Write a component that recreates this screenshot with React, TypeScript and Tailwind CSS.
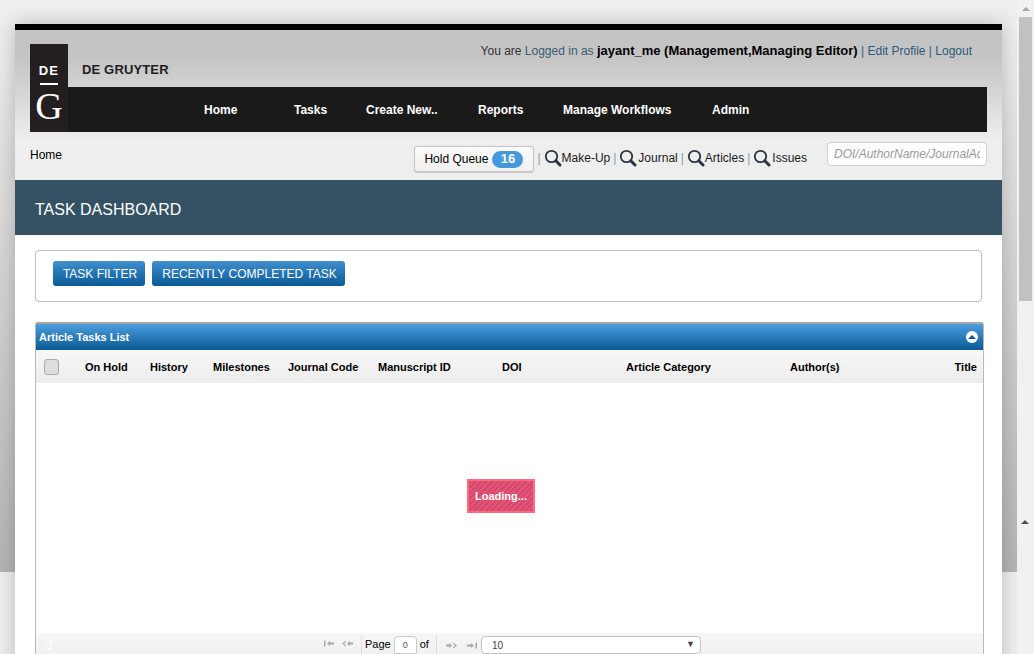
function SearchIcon() {
  return (
    <svg width="18" height="18" viewBox="0 0 18 18" className="shrink-0">
      <circle cx="7.5" cy="7.5" r="5.7" fill="none" stroke="#2c3440" strokeWidth="1.8" />
      <path d="M11.8 11.8 L16 16" stroke="#2c3440" strokeWidth="3" strokeLinecap="round" />
    </svg>
  );
}

function Pipe() {
  return <span className="mx-[3px] text-[#8a9aa5]">|</span>;
}

function PagerArrows({ flip }: { flip?: boolean }) {
  const fill = "#a8a8a8";
  return (
    <div className={flip ? "flex rotate-180 items-center gap-[10px]" : "flex items-center gap-[8px]"}>
      <svg width="10" height="7" viewBox="0 0 10 7">
        <rect x="0" y="0.5" width="1.5" height="6" fill={fill} />
        <path d="M3 3.5 L6 1 V2.5 H10 V4.5 H6 V6 Z" fill={fill} />
      </svg>
      <svg width="11" height="7" viewBox="0 0 11 7">
        <path d="M0 3.5 L4 0.5 V2 L1.8 3.5 L4 5 V6.5 Z" fill={fill} />
        <path d="M5 3.5 L8 1 V2.5 H11 V4.5 H8 V6 Z" fill={fill} />
      </svg>
    </div>
  );
}

const columns = [
  { label: "On Hold", width: "w-[65px]" },
  { label: "History", width: "w-[63px]" },
  { label: "Milestones", width: "w-[75px]" },
  { label: "Journal Code", width: "w-[90px]" },
  { label: "Manuscript ID", width: "w-[124px]" },
  { label: "DOI", width: "w-[124px]" },
  { label: "Article Category", width: "w-[164px]" },
  { label: "Author(s)", width: "w-[164px]" },
];

const menu = [
  { label: "Home", width: "w-[90px]" },
  { label: "Tasks", width: "w-[72px]" },
  { label: "Create New..", width: "w-[112px]" },
  { label: "Reports", width: "w-[85px]" },
  { label: "Manage Workflows", width: "w-[149px]" },
  { label: "Admin", width: "w-[60px]" },
];

export default function App() {
  return (
    <div className="flex h-[654px] w-[1034px] overflow-hidden bg-[#eeeeee] font-['Liberation_Sans',Arial,sans-serif] text-[12px] text-black">
      {/* page */}
      <div className="relative w-[1017px] shrink-0 bg-[linear-gradient(to_bottom,#eeeeee_0px,#eeeeee_24px,#b4b4b4_572px,#eeeeee_572px)] px-[15px] pt-[24px]">
        <div className="h-[800px] w-[987px] bg-white shadow-[0_0_18px_rgba(0,0,0,0.22)]">
          {/* header */}
          <div className="border-t-[6px] border-black bg-[linear-gradient(to_bottom,#c3c3c3_0px,#c5c5c5_30px,#eeeeee_110px)]">
            <div className="relative px-[15px] pt-[14px]">
              <div className="absolute left-[15px] top-[14px] z-10 flex h-[88px] w-[38px] flex-col items-center bg-[#231f20] text-white">
                <span className="mt-[20px] text-[13px] font-bold leading-none tracking-[1.2px]">DE</span>
                <div className="mt-[6px] h-[2px] w-[18px] bg-white" />
                <span className="mt-[2px] font-['Liberation_Serif',serif] text-[38px] leading-[38px]">G</span>
              </div>
              <div className="flex h-[43px] justify-between">
                <div className="pl-[52px] pt-[19px] text-[13px] font-bold leading-[14px] tracking-[0.15px] text-[#231f20]">
                  DE GRUYTER
                </div>
                <div className="pr-[15px] text-right text-[12px] leading-[14px] text-[#333333]">
                  You are <span className="text-[#3a5a75]">Logged in as</span>{" "}
                  <span className="text-[13px] font-bold text-black">jayant_me (Management,Managing Editor)</span>{" "}
                  <span className="text-[#2a5a7a]">| Edit Profile | Logout</span>
                </div>
              </div>
              <div className="flex h-[45px] items-center bg-[#1a1a1a] pl-[174px] text-[12px] font-bold text-white">
                {menu.map((item) => (
                  <span key={item.label} className={item.width}>
                    {item.label}
                  </span>
                ))}
              </div>
            </div>
            {/* breadcrumb row */}
            <div className="flex h-[48px] items-start justify-between px-[15px]">
              <span className="pt-[16px] text-[12px] leading-[14px]">Home</span>
              <div className="flex items-start">
                <div className="mt-[14px] flex h-[26px] w-[120px] items-center rounded-[3px] border border-[#c4c4c4] bg-[linear-gradient(to_bottom,#fafafa,#f0f0f0)] pl-[9px] shadow-[0_1px_1px_rgba(0,0,0,0.15)]">
                  <span className="text-[12px]">Hold Queue</span>
                  <span className="ml-[4px] flex h-[17px] w-[31px] items-center justify-center rounded-full bg-[#4498db] text-[13px] font-bold text-white">
                    16
                  </span>
                </div>
                <div className="mt-[17px] flex items-center text-[12px] leading-[18px] text-[#1a1a1a]">
                  <Pipe />
                  <SearchIcon />
                  <span>Make-Up</span>
                  <Pipe />
                  <SearchIcon />
                  <span className="ml-[1px]">Journal</span>
                  <Pipe />
                  <SearchIcon />
                  <span>Articles</span>
                  <Pipe />
                  <SearchIcon />
                  <span className="ml-[1px]">Issues</span>
                </div>
                <input
                  readOnly
                  placeholder="DOI/AuthorName/JournalAcronym"
                  className="ml-[20px] mt-[10px] h-[24px] w-[160px] rounded-[4px] border border-[#d0d0d0] bg-white px-[6px] text-[12px] italic outline-none placeholder:text-[#999999]"
                />
              </div>
            </div>
          </div>

          {/* title bar */}
          <div className="flex h-[55px] items-center bg-[#345263] pl-[20px] pt-[5px] text-[16px] text-white">
            TASK DASHBOARD
          </div>

          <div className="px-[20px] pt-[15px]">
            {/* filter box */}
            <div className="flex h-[52px] w-[947px] gap-[7px] rounded-[4px] border border-[#bfbfbf] pl-[17px] pt-[10px]">
              <button className="h-[25px] w-[92px] rounded-[3px] bg-[linear-gradient(to_bottom,#3f8fd0,#0b5a95)] pl-[2px] text-[12px] text-white">
                TASK FILTER
              </button>
              <button className="h-[25px] w-[193px] rounded-[3px] bg-[linear-gradient(to_bottom,#3f8fd0,#0b5a95)] pl-[2px] text-[12px] text-white">
                RECENTLY COMPLETED TASK
              </button>
            </div>

            {/* grid */}
            <div className="mt-[20px] h-[400px] w-[949px] rounded-t-[3px] border border-t-2 border-[#bdb8b8] border-t-[#a8a8a8]">
              <div className="flex h-[26px] items-center justify-between bg-[linear-gradient(to_bottom,#4c9edf,#0b5a95)] pl-[3px] pr-[5px]">
                <span className="text-[11px] font-bold text-white">Article Tasks List</span>
                <span className="flex h-[12px] w-[12px] items-center justify-center rounded-full bg-white">
                  <span className="h-0 w-0 border-x-[4px] border-b-[4px] border-x-transparent border-b-[#0b5a95]" />
                </span>
              </div>
              <div className="flex h-[33px] items-center bg-[linear-gradient(to_bottom,#f8f8f8,#ececec)] pl-[8px] text-[11px] font-bold leading-none">
                <div className="mr-[26px] h-[16px] w-[15px] rounded-[3px] border border-[#aaaaaa] bg-[#dddddd]" />
                {columns.map((col) => (
                  <span key={col.label} className={`${col.width} whitespace-nowrap pt-[2px]`}>
                    {col.label}
                  </span>
                ))}
                <span className="grow pr-[6px] pt-[2px] text-right">Title</span>
              </div>
              <div className="relative h-[250px] bg-white">
                <div className="absolute left-[431px] top-[96px] flex h-[34px] w-[68px] items-center justify-center border-2 border-[#ff6b7c] bg-[repeating-linear-gradient(135deg,#d9486a_0px,#d9486a_2px,#e0567a_2px,#e0567a_4px)] text-[11px] font-bold text-white">
                  Loading...
                </div>
              </div>
              {/* pager */}
              <div className="relative flex h-[40px] items-start bg-[linear-gradient(to_bottom,#f6f6f6,#ececec)] pl-[288px] pt-[3px]">
                <svg width="12" height="12" viewBox="0 0 12 12" className="absolute left-[8px] top-[6px]">
                  <path d="M9.5 3.5 A4.3 4.3 0 0 0 2.5 4 M2.5 8.5 A4.3 4.3 0 0 0 9.5 8 M6.5 1 L6 11" fill="none" stroke="#ffffff" strokeWidth="1.2" />
                </svg>
                <div className="mt-[4px] flex w-[37px] items-center">
                  <PagerArrows />
                </div>
                <div className="h-[18px] border-l border-[#dddddd] pl-[3px] pr-[3px] pt-[1px] text-[11px] leading-[14px]">Page</div>
                <input
                  readOnly
                  value="0"
                  className="h-[18px] w-[23px] rounded-t-[4px] border border-[#cccccc] bg-white text-center text-[9px] text-[#555555] outline-none"
                />
                <div className="pl-[3px] pr-[7px] pt-[1px] text-[11px] leading-[14px]">of</div>
                <div className="mr-[4px] flex h-[18px] items-center border-l border-[#dddddd] pl-[9px]">
                  <PagerArrows flip />
                </div>
                <div className="flex h-[18px] w-[220px] items-center justify-between rounded-[4px] border border-[#c4c4c4] bg-white pl-[10px] pr-[5px] text-[10px] text-[#444444]">
                  <span>10</span>
                  <span className="text-[9px] text-[#444444]">▼</span>
                </div>
              </div>
            </div>
          </div>
        </div>
      </div>

      {/* scrollbar */}
      <div className="relative w-[17px] shrink-0 bg-[#f1f1f1]">
        <div className="flex h-[17px] items-center justify-center">
          <div className="h-0 w-0 border-x-[4px] border-b-[4px] border-x-transparent border-b-[#a3a3a3]" />
        </div>
        <div className="mx-auto h-[284px] w-[13px] bg-[#c1c1c1]" />
        <div className="absolute left-[4px] top-[520px] h-0 w-0 border-x-[4px] border-b-[4px] border-x-transparent border-b-[#505050]" />
      </div>
    </div>
  );
}
